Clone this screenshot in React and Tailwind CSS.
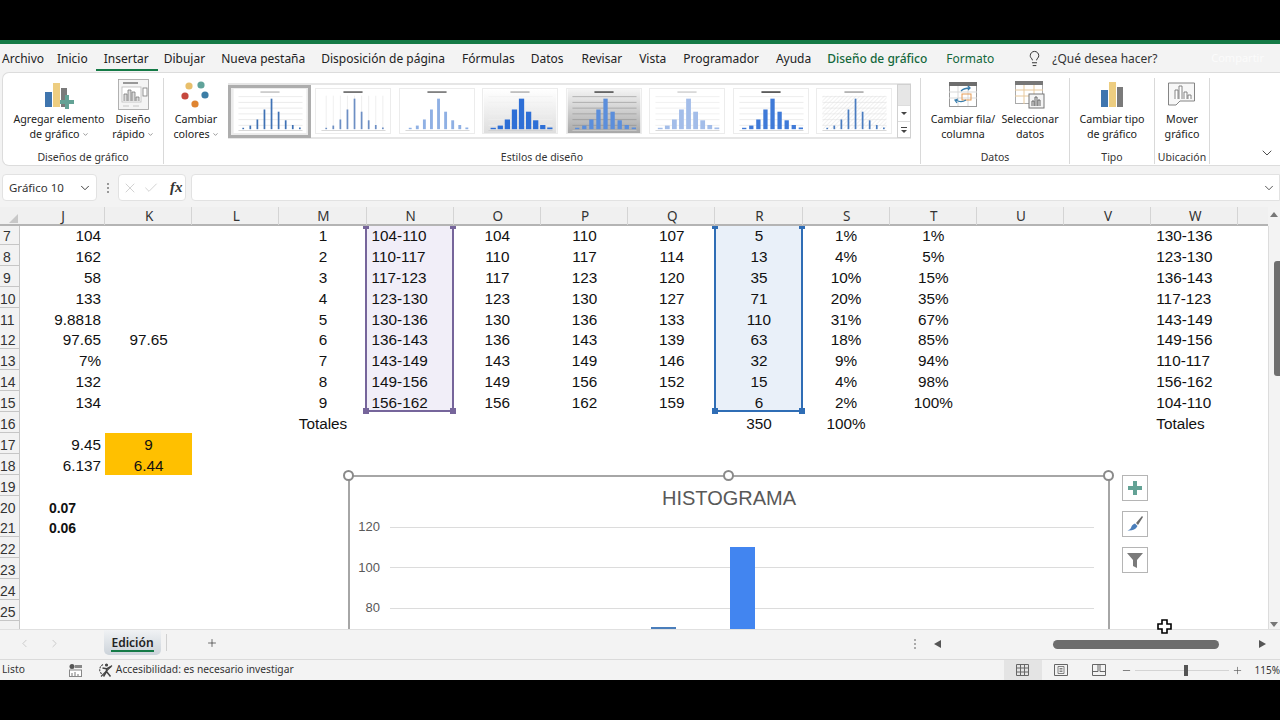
import { ChevronDown, ChevronLeft, ChevronRight, Lightbulb, Plus, X, Check, Minus } from 'lucide-react'

const tabs = [
    ['Archivo', 'ml-[2px]'],
    ['Inicio', 'ml-[13px]'],
    ['Insertar', 'ml-[16px]'],
    ['Dibujar', 'ml-[15px]'],
    ['Nueva pestaña', 'ml-[16px]'],
    ['Disposición de página', 'ml-[16px]'],
    ['Fórmulas', 'ml-[17px]'],
    ['Datos', 'ml-[16px]'],
    ['Revisar', 'ml-[18px]'],
    ['Vista', 'ml-[17px]'],
    ['Programador', 'ml-[17px]'],
    ['Ayuda', 'ml-[17px]'],
]

const columns = ['J', 'K', 'L', 'M', 'N', 'O', 'P', 'Q', 'R', 'S', 'T', 'U', 'V', 'W']

const rows = [
    { n: 7, J: '104', M: '1', N: '104-110', O: '104', P: '110', Q: '107', R: '5', S: '1%', T: '1%', W: '130-136' },
    { n: 8, J: '162', M: '2', N: '110-117', O: '110', P: '117', Q: '114', R: '13', S: '4%', T: '5%', W: '123-130' },
    { n: 9, J: '58', M: '3', N: '117-123', O: '117', P: '123', Q: '120', R: '35', S: '10%', T: '15%', W: '136-143' },
    { n: 10, J: '133', M: '4', N: '123-130', O: '123', P: '130', Q: '127', R: '71', S: '20%', T: '35%', W: '117-123' },
    { n: 11, J: '9.8818', M: '5', N: '130-136', O: '130', P: '136', Q: '133', R: '110', S: '31%', T: '67%', W: '143-149' },
    { n: 12, J: '97.65', K: '97.65', M: '6', N: '136-143', O: '136', P: '143', Q: '139', R: '63', S: '18%', T: '85%', W: '149-156' },
    { n: 13, J: '7%', M: '7', N: '143-149', O: '143', P: '149', Q: '146', R: '32', S: '9%', T: '94%', W: '110-117' },
    { n: 14, J: '132', M: '8', N: '149-156', O: '149', P: '156', Q: '152', R: '15', S: '4%', T: '98%', W: '156-162' },
    { n: 15, J: '134', M: '9', N: '156-162', O: '156', P: '162', Q: '159', R: '6', S: '2%', T: '100%', W: '104-110' },
    { n: 16, M: 'Totales', R: '350', S: '100%', W: 'Totales' },
    { n: 17, J: '9.45', K: '9' },
    { n: 18, J: '6.137', K: '6.44' },
    { n: 19 },
    { n: 20, J: '0.07', bold: true },
    { n: 21, J: '0.06', bold: true },
    { n: 22 },
    { n: 23 },
    { n: 24 },
    { n: 25 },
    { n: '' },
]

const heights = [5, 13, 35, 71, 110, 63, 32, 15, 6]

const thumbs = [
    { id: 'a', bar: '#3f72b5', w: 1.8, title: '#bbb', lines: '#dcdcdc', top: '#fff', bottom: '#fff' },
    { id: 'b', bar: '#6d8fc4', w: 1.8, title: '#444', lines: '#fff', top: '#fff', bottom: '#fff', vert: true },
    { id: 'c', bar: '#8fb0e4', w: 3, title: '#555', lines: '#fff', top: '#fff', bottom: '#fff' },
    { id: 'd', bar: '#2e6fd6', w: 5.5, title: '#aaa', lines: '#f0f0f0', top: '#fff', bottom: '#dedede' },
    { id: 'e', bar: '#5b8edb', w: 4.5, title: '#333', lines: '#8c8c8c', top: '#f4f4f4', bottom: '#a8a8a8' },
    { id: 'f', bar: '#a3bde9', w: 5, title: '#ccc', lines: '#e4e4e4', top: '#fff', bottom: '#fff' },
    { id: 'g', bar: '#3f7ad8', w: 4.5, title: '#222', lines: '#ddd', top: '#fff', bottom: '#fff' },
    { id: 'h', bar: '#4a7cc0', w: 1.8, title: '#999', lines: '#e0e0e0', top: '#fff', bottom: '#fff', hatch: true },
]

const Thumb = ({ t }) => (
    <svg viewBox="0 0 76 46" className="w-[76px] h-[46px] shrink-0 border border-[#ececec]">
        <defs>
            <linearGradient id={`bg-${t.id}`} x1="0" x2="0" y1="0" y2="1">
                <stop offset="0" stopColor={t.top} />
                <stop offset="1" stopColor={t.bottom} />
            </linearGradient>
            <pattern id={`hatch-${t.id}`} width="3" height="3" patternUnits="userSpaceOnUse" patternTransform="rotate(45)">
                <line x1="0" x2="0" y1="0" y2="3" stroke="#dcdcdc" strokeWidth="0.8" />
            </pattern>
        </defs>
        <rect width="76" height="46" fill={`url(#bg-${t.id})`} />
        {t.hatch && <rect x="5" y="7" width="67" height="35" fill={`url(#hatch-${t.id})`} />}
        <rect x="28" y="2.5" width="20" height="1.4" fill={t.title} />
        {[8, 14, 20, 26, 32, 38].map((y) => (
            <line key={y} x1="5" x2="72" y1={y} y2={y} stroke={t.lines} strokeWidth="0.6" />
        ))}
        {t.vert && heights.map((h, i) => (
            <line key={i} x1={10 + i * 7.4} x2={10 + i * 7.4} y1="7" y2="42" stroke="#e2e2e2" strokeWidth="0.6" />
        ))}
        {heights.map((h, i) => (
            <rect key={i} x={10 + i * 7.4 - t.w / 2} y={42 - h * 0.29} width={t.w} height={h * 0.29} fill={t.bar} />
        ))}
        <rect x="5" y="43" width="67" height="0.8" fill="#ccc" />
    </svg>
)

const Group = ({ label, className, children }) => (
    <div className={`flex flex-col border-r border-[#d9d9d9] h-[86px] mt-[5px] ${className}`}>
        <div className="flex-1 flex">{children}</div>
        <p className="text-[10.5px] leading-[14px] text-center text-[#333]">{label}</p>
    </div>
)

const BigButton = ({ icon, top, bottom, arrow, className }) => (
    <div className={`flex flex-col items-center ${className}`}>
        <div className="h-[31px] flex items-center justify-center mt-[1px]">{icon}</div>
        <p className="text-[10.7px] leading-[15px] text-center text-[#222] mt-[2px] whitespace-nowrap">{top}</p>
        <p className="text-[10.7px] leading-[15px] text-center text-[#222] whitespace-nowrap flex items-center gap-[2px]">
            {bottom}
            {arrow && <ChevronDown size={7} strokeWidth={2} className="text-[#555]" />}
        </p>
    </div>
)

const AddElementIcon = () => (
    <svg width="30" height="28" viewBox="0 0 30 28">
        <rect x="1" y="11" width="7" height="15" fill="#3f75ae" />
        <rect x="9" y="2" width="7" height="24" fill="#edcd80" />
        <rect x="17" y="7" width="6" height="19" fill="#7a7a7a" />
        <path d="M21 14h4v5h5v4h-5v5h-4v-5h-5v-4h5z" fill="#63a295" />
    </svg>
)

const QuickLayoutIcon = () => (
    <svg width="31" height="31" viewBox="0 0 31 31" fill="none" stroke="#7a7a7a" strokeWidth="0.8">
        <rect x="0.5" y="0.5" width="30" height="30" fill="#f4f4f4" stroke="#a0a0a0" />
        <line x1="5" x2="20" y1="4" y2="4" strokeWidth="1.5" />
        <rect x="4" y="8" width="19" height="15" fill="#fff" stroke="#bbb" />
        <path d="M6 22v-7h3v7M10 22V11h3v11M14 22v-9h3v9M18 22v-4h3v4" fill="#ddd" />
        <rect x="25" y="9" width="4" height="8" fill="#fff" />
        <line x1="5" x2="11" y1="27" y2="27" stroke="#bbb" />
        <line x1="15" x2="21" y1="27" y2="27" stroke="#bbb" />
    </svg>
)

const ColorsIcon = () => (
    <svg width="30" height="28" viewBox="0 0 30 28">
        <circle cx="8" cy="5" r="3.6" fill="#e8bf6b" />
        <circle cx="20" cy="4" r="3.6" fill="#60a39a" />
        <circle cx="4" cy="15" r="3.6" fill="#c6483e" />
        <circle cx="24" cy="14" r="3.6" fill="#3c7ea6" />
        <circle cx="14" cy="23" r="3.6" fill="#df8431" />
    </svg>
)

const SwitchIcon = () => (
    <svg width="29" height="25" viewBox="0 0 29 25" fill="none">
        <rect x="0.5" y="0.5" width="27" height="24" fill="#fff" stroke="#999" />
        <rect x="0" y="0" width="28" height="4" fill="#6d6d6d" />
        <path d="M0 10h28M0 16h28M9 4v20M19 4v20" stroke="#d9d9d9" />
        <rect x="13" y="12" width="9" height="6" stroke="#e59b54" />
        <path d="M12 9c3-3 6-3 9-3m-2-2 2 2-2 2" stroke="#3a7fae" strokeWidth="1.3" />
        <path d="M17 18c-3 2-7 2-10 0m1 3-2-3 3-1" stroke="#3a7fae" strokeWidth="1.3" />
    </svg>
)

const SelectDataIcon = () => (
    <svg width="30" height="28" viewBox="0 0 30 28" fill="none">
        <rect x="0.5" y="0.5" width="27" height="22" fill="#fff" stroke="#aaa" />
        <rect x="0" y="0" width="28" height="4" fill="#777" />
        <path d="M0 9h28M0 15h28M9 4v19M19 4v19" stroke="#e8c99c" />
        <rect x="14" y="13" width="15" height="14" fill="#f4f4f4" stroke="#777" />
        <path d="M17 25v-5h2v5M20 25v-9h2v9M23 25v-6h2v6" stroke="#666" />
    </svg>
)

const ChangeTypeIcon = () => (
    <svg width="23" height="25" viewBox="0 0 23 25">
        <rect x="0" y="8" width="7" height="17" fill="#3f75ae" />
        <rect x="8" y="0" width="7" height="25" fill="#edcd80" />
        <rect x="16" y="5" width="6" height="20" fill="#7a7a7a" />
    </svg>
)

const MoveChartIcon = () => (
    <svg width="28" height="25" viewBox="0 0 28 25" fill="none" stroke="#777" strokeWidth="0.9">
        <path d="M0.5 23V1h26v18H12l-4 4z" fill="#f7f7f7" />
        <path d="M7 17V8h3v9M11 17V4h3v13M16 17v-7h3v7M20 17v-4h3v4" fill="#fff" />
    </svg>
)

const AccessIcon = () => (
    <svg width="16" height="16" viewBox="0 0 16 16" fill="none" stroke="#444" strokeWidth="1.1">
        <path d="M5 2.5C2.5 4 1 6.5 2 9.5c.5 1.2 1.2 2 2 2.6" strokeDasharray="2 1" />
        <circle cx="8.5" cy="3" r="1" fill="#444" />
        <path d="M4.5 6 8.5 6.8 13 4.5M8.5 6.8V9.5M8.5 9.5 5.5 14.5M8.5 9.5 12.5 14.5" strokeWidth="1.5" />
        <path d="M3 14.5 14 3.5" />
    </svg>
)

const Cell = ({ col, row }) => {
    const value = row[col]
    let align = 'justify-center'
    if (col === 'N' || col === 'W') align = 'justify-start pl-[5px]'
    if (col === 'J' && !row.bold) align = 'justify-end pr-[4px]'
    let bg = ''
    if (col === 'K' && (row.n === 17 || row.n === 18)) bg = 'bg-[#ffc000]'
    if (col === 'N' && row.n <= 15) bg = 'bg-[#f1eef8]'
    if (col === 'R' && row.n <= 15) bg = 'bg-[#e9f0f9]'
    return (
        <div className={`flex items-center min-w-0 whitespace-nowrap pt-[3px] ${align} ${bg} ${row.bold ? 'font-bold text-[14px]' : ''}`}>
            {value}
        </div>
    )
}

const SideButton = ({ children }) => (
    <div className="w-[26px] h-[26px] border border-[#b5b5b5] bg-white flex items-center justify-center">{children}</div>
)

const Selection = ({ className, handle }) => (
    <div className={`absolute top-0 w-[89px] h-[186px] border-x-2 border-b-2 ${className}`}>
        <span className={`absolute -left-[4px] top-0 w-[6px] h-[3px] ${handle}`} />
        <span className={`absolute -right-[4px] top-0 w-[6px] h-[3px] ${handle}`} />
        <span className={`absolute -left-[4px] -bottom-[4px] w-[6px] h-[6px] ${handle}`} />
        <span className={`absolute -right-[4px] -bottom-[4px] w-[6px] h-[6px] ${handle}`} />
    </div>
)

const Chart = () => (
    <div className="absolute left-[348px] top-[249px] w-[762px] h-[200px] border-2 border-b-0 border-[#a6a6a6] bg-white font-['Liberation_Sans',sans-serif]">
        <p className="text-center text-[20px] leading-[22px] text-[#595959] mt-[10px]">HISTOGRAMA</p>
        <div className="relative mt-[12px] ml-[8px] mr-[14px] flex flex-col gap-[28.5px] text-[13px] text-[#595959]">
            {['120', '100', '80'].map((label) => (
                <div key={label} className="flex items-center gap-[10px] h-[12px]">
                    <span className="w-[22px] text-right">{label}</span>
                    <span className="flex-1 h-px bg-[#dcdcdc]" />
                </div>
            ))}
            <span className="absolute left-[293px] top-[106px] w-[25px] h-[6px] bg-[#4a7ebb]" />
            <span className="absolute left-[372px] top-[26px] w-[25px] h-[100px] bg-[#4285f0]" />
        </div>
    </div>
)

const Sheet = () => (
    <div className="relative flex-1 min-h-0 overflow-hidden bg-white">
        <div className="flex flex-col -mt-[2px] text-[15.3px] text-[#111] font-['Liberation_Sans',sans-serif]">
            {rows.map((row) => (
                <div key={row.n} className="grid grid-cols-[20px_85px_repeat(13,87.2px)] h-[20.9px] shrink-0 leading-[18px]">
                    <div className="bg-[#f2f2f2] border-r border-b border-[#c6c6c6] text-[14px] text-[#333] text-center pr-[5px] pt-[3px] overflow-hidden">{row.n}</div>
                    {columns.map((col) => (
                        <Cell key={col} col={col} row={row} />
                    ))}
                </div>
            ))}
        </div>

        <Selection className="left-[365px] border-[#76659b]" handle="bg-[#76659b]" />
        <Selection className="left-[714px] border-[#2f6db5]" handle="bg-[#2f6db5]" />

        <Chart />
        <span className="absolute left-[343px] top-[244px] w-[11px] h-[11px] rounded-full border-2 border-[#8a8a8a] bg-white" />
        <span className="absolute left-[723px] top-[244px] w-[11px] h-[11px] rounded-full border-2 border-[#8a8a8a] bg-white" />
        <span className="absolute left-[1103px] top-[244px] w-[11px] h-[11px] rounded-full border-2 border-[#8a8a8a] bg-white" />

        <div className="absolute left-[1122px] top-[249px] flex flex-col gap-[10px]">
            <SideButton>
                <svg width="16" height="16" viewBox="0 0 16 16">
                    <path d="M6 1h4v5h5v4h-5v5H6v-5H1V6h5z" fill="#63a295" />
                </svg>
            </SideButton>
            <SideButton>
                <svg width="20" height="20" viewBox="0 0 20 20">
                    <path d="M11 9 17 2l1 1-5 8z" fill="#6b6b6b" />
                    <path d="M10 9.5 12.5 12c-2 4-6 5-10 4.5 2.5-1 3.5-2 4-4 .5-1.5 2-2.5 3.5-3z" fill="#4a7ebb" />
                </svg>
            </SideButton>
            <SideButton>
                <svg width="18" height="18" viewBox="0 0 18 18">
                    <path d="M1 2h16l-6 7v8l-4-2V9z" fill="#7a7a7a" />
                </svg>
            </SideButton>
        </div>
    </div>
)

const App = () => {
    return (
        <div className="w-[1280px] h-[720px] bg-black flex flex-col overflow-hidden font-['Noto_Sans',sans-serif]">
            <div className="h-[40px] shrink-0" />
            <div className="relative h-[640px] bg-[#f3f3f3] border-t-4 border-[#147a46] flex flex-col">
                <div className="h-[28px] shrink-0 flex items-center pt-[1px] text-[12px] text-[#222]">
                    {tabs.map(([name, margin]) => (
                        <span key={name} className={`relative whitespace-nowrap ${margin}`}>
                            {name}
                            {name === 'Insertar' && <span className="absolute -left-[8px] -right-[9px] top-[19px] h-[2px] bg-[#147a46]" />}
                        </span>
                    ))}
                    <span className="ml-[16px] whitespace-nowrap font-medium text-[#14683c]">Diseño de gráfico</span>
                    <span className="ml-[19px] whitespace-nowrap text-[#14683c]">Formato</span>
                    <Lightbulb size={17} strokeWidth={1.4} className="ml-[32px] text-[#333]" />
                    <span className="ml-[9px] whitespace-nowrap text-[#333]">¿Qué desea hacer?</span>
                    <span className="ml-auto mr-[16px] text-[11px] text-[#fbfbfb]">Compartir</span>
                </div>

                <div className="h-[94px] shrink-0 ml-[2px] bg-white rounded-l-[7px] border-y border-l border-[#dcdcdc] flex relative">
                    <Group label="Diseños de gráfico" className="w-[161px]">
                        <BigButton icon={<AddElementIcon />} top="Agregar elemento" bottom="de gráfico" arrow className="w-[112px]" />
                        <BigButton icon={<QuickLayoutIcon />} top="Diseño" bottom="rápido" arrow className="w-[36px]" />
                    </Group>
                    <Group label="Estilos de diseño" className="w-[757px]">
                        <BigButton icon={<ColorsIcon />} top="Cambiar" bottom="colores" arrow className="w-[64px] shrink-0" />
                        <div className="flex items-center h-[56px] mt-[5px] bg-white border-y-2 border-[#e6e6e6]">
                            <div className="flex items-center justify-center w-[83px] h-[53px] border-[3px] border-[#adadad] bg-[#ececec]">
                                <Thumb t={thumbs[0]} />
                            </div>
                            <div className="flex items-center gap-[7.5px] ml-[4px] mr-[5px]">
                                {thumbs.slice(1).map((t) => (
                                    <Thumb key={t.id} t={t} />
                                ))}
                            </div>
                            <div className="w-[14px] h-[54px] border border-[#d0d0d0] bg-white flex flex-col text-[#555]">
                                <div className="h-[20px] bg-[#e6e6e6]" />
                                <div className="h-[17px] border-y border-[#ddd] flex items-center justify-center">
                                    <span className="w-0 h-0 border-x-[3px] border-t-[3px] border-x-transparent border-t-[#444]" />
                                </div>
                                <div className="flex-1 flex flex-col items-center justify-center gap-[2px]">
                                    <span className="w-[6px] h-px bg-[#444]" />
                                    <span className="w-0 h-0 border-x-[3px] border-t-[3px] border-x-transparent border-t-[#444]" />
                                </div>
                            </div>
                        </div>
                    </Group>
                    <Group label="Datos" className="w-[149px]">
                        <BigButton icon={<SwitchIcon />} top="Cambiar fila/" bottom="columna" className="w-[84px]" />
                        <BigButton icon={<SelectDataIcon />} top="Seleccionar" bottom="datos" className="w-[50px]" />
                    </Group>
                    <Group label="Tipo" className="w-[85px]">
                        <BigButton icon={<ChangeTypeIcon />} top="Cambiar tipo" bottom="de gráfico" className="w-full" />
                    </Group>
                    <Group label="Ubicación" className="w-[55px]">
                        <BigButton icon={<MoveChartIcon />} top="Mover" bottom="gráfico" className="w-full" />
                    </Group>
                    <ChevronDown size={16} strokeWidth={1.3} className="absolute right-[5px] bottom-[4px] text-[#333]" />
                </div>

                <div className="h-[27px] shrink-0 mt-[8px] flex items-stretch">
                    <div className="w-[95px] ml-[2px] bg-white rounded-[4px] border border-[#e2e2e2] flex items-center justify-between pl-[6px] pr-[4px] text-[11.5px] text-[#333]">
                        Gráfico 10
                        <ChevronDown size={14} strokeWidth={1.6} className="text-[#333]" />
                    </div>
                    <div className="w-[21px] flex flex-col items-center justify-center gap-[2px]">
                        <span className="w-[2px] h-[2px] bg-[#999]" />
                        <span className="w-[2px] h-[2px] bg-[#999]" />
                        <span className="w-[2px] h-[2px] bg-[#999]" />
                    </div>
                    <div className="w-[68px] bg-white rounded-[4px] border border-[#e2e2e2] flex items-center pl-[3px] gap-[5px]">
                        <X size={16} strokeWidth={1} className="text-[#bbb]" />
                        <Check size={16} strokeWidth={1} className="text-[#bbb]" />
                        <span className="ml-[6px] font-['Liberation_Serif',serif] italic font-bold text-[15px] text-[#333]">fx</span>
                    </div>
                    <div className="flex-1 ml-[5px] bg-white rounded-l-[4px] border border-[#e2e2e2] flex items-center justify-end pr-[3px]">
                        <ChevronDown size={14} strokeWidth={1.4} className="text-[#333]" />
                    </div>
                </div>

                <div className="h-[19px] mt-[6px] shrink-0 flex relative z-10">
                    <div className="flex-1 grid grid-cols-[20px_85px_repeat(13,87.2px)] border-b-2 border-[#b4b4b4] bg-[#f0f0f0] text-[13.5px] leading-[18px] text-[#333] min-w-0">
                        <div className="flex items-end justify-end pr-[2px] pb-[2px]">
                            <span className="w-0 h-0 border-l-[9px] border-b-[9px] border-l-transparent border-b-[#c8c8c8]" />
                        </div>
                        {columns.map((col) => (
                            <div key={col} className="text-center pl-[2px] border-r border-[#d4d4d4]">{col}</div>
                        ))}
                    </div>
                    <div className="w-[12px] flex justify-center pt-[5px]">
                        <span className="w-0 h-0 border-x-[4px] border-b-[5px] border-x-transparent border-b-[#777]" />
                    </div>
                </div>

                <div className="flex-1 min-h-0 flex">
                    <Sheet />
                    <div className="w-[12px] shrink-0 relative border-l border-[#dcdcdc]">
                        <span className="absolute right-0 top-[35px] w-[6px] h-[115px] rounded-l-[3px] bg-[#6f6f6f]" />
                        <span className="absolute right-[2px] bottom-[2px] w-0 h-0 border-x-[4px] border-t-[5px] border-x-transparent border-t-[#777]" />
                    </div>
                </div>

                <div className="h-[30px] shrink-0 border-t border-[#e0e0e0] flex items-start text-[#222]">
                    <ChevronLeft size={13} strokeWidth={1} className="ml-[18px] mt-[7px] text-[#aaa]" />
                    <ChevronRight size={13} strokeWidth={1} className="ml-[17px] mt-[7px] text-[#aaa]" />
                    <div className="ml-[43px] w-[57px] h-[25px] rounded-b-[5px] bg-gradient-to-b from-[#f0f2f4] to-[#ccd3da] flex justify-center pt-[5px]">
                        <span className="text-[12px] font-semibold leading-[16px] border-b-2 border-[#147a46] h-[17px]">Edición</span>
                    </div>
                    <span className="ml-[5px] mt-[4px] w-px h-[17px] bg-[#d0d0d0]" />
                    <Plus size={12} strokeWidth={1.4} className="ml-[39px] mt-[7px] text-[#333]" />
                    <div className="ml-[696px] mt-[9px] flex flex-col gap-[2px]">
                        <span className="w-[2px] h-[2px] bg-[#aaa]" />
                        <span className="w-[2px] h-[2px] bg-[#aaa]" />
                        <span className="w-[2px] h-[2px] bg-[#aaa]" />
                    </div>
                    <span className="ml-[18px] mt-[10px] w-0 h-0 border-y-[4.5px] border-r-[7px] border-y-transparent border-r-[#555]" />
                    <span className="ml-[112px] mt-[10px] w-[166px] h-[9px] rounded-full bg-[#6d6d6d]" />
                    <span className="ml-[40px] mt-[10px] w-0 h-0 border-y-[4.5px] border-l-[7px] border-y-transparent border-l-[#555]" />
                </div>

                <div className="h-[21px] shrink-0 border-t border-[#dadada] flex items-center text-[10.25px] text-[#333]">
                    <span className="ml-[2px]">Listo</span>
                    <svg width="13" height="13" viewBox="0 0 13 13" className="ml-[44px]">
                        <circle cx="3" cy="2.5" r="2.5" fill="#555" />
                        <rect x="6" y="1" width="7" height="3" fill="#888" />
                        <rect x="0.5" y="6" width="12" height="6.5" fill="#fff" stroke="#888" />
                        <path d="M3 12V9M6 12V8M9 12v-2" stroke="#777" />
                    </svg>
                    <span className="ml-[16px]"><AccessIcon /></span>
                    <span className="ml-[2px]">Accesibilidad: es necesario investigar</span>
                    <div className="ml-auto flex items-center h-full">
                        <div className="w-[38px] h-full bg-[#e4e4e4] flex items-center justify-center">
                            <svg width="13" height="12" viewBox="0 0 13 12" fill="none" stroke="#666">
                                <path d="M.5.5h12v11H.5zM.5 4h12M.5 8h12M4.5.5v11M8.5.5v11" />
                            </svg>
                        </div>
                        <div className="w-[38px] flex justify-center">
                            <svg width="14" height="12" viewBox="0 0 14 12" fill="none" stroke="#666">
                                <path d="M.5.5h13v11H.5z" />
                                <path d="M4 2.5h6v7H4zM5.5 4.5h3M5.5 6h3M5.5 7.5h3" strokeWidth=".8" />
                            </svg>
                        </div>
                        <div className="w-[38px] flex justify-center">
                            <svg width="14" height="12" viewBox="0 0 14 12" fill="none" stroke="#666">
                                <path d="M.5.5h13v11H.5zM.5 7.5h5.5V.5M8 .5v7h5.5" />
                            </svg>
                        </div>
                        <Minus size={11} strokeWidth={1.6} className="ml-[3px] text-[#555]" />
                        <div className="relative w-[94px] h-px bg-[#d4d4d4] ml-[3px]">
                            <span className="absolute left-[49px] -top-[5px] w-[4px] h-[11px] bg-[#555]" />
                        </div>
                        <Plus size={11} strokeWidth={1.4} className="ml-[3px] text-[#555]" />
                        <span className="ml-[12px] text-[10px] whitespace-nowrap">115%</span>
                    </div>
                </div>

                <svg width="15" height="15" viewBox="0 0 15 15" className="absolute left-[1157px] top-[575px]">
                    <path d="M5 1h5v4h4v5h-4v4H5v-4H1V5h4z" fill="#fff" stroke="#000" strokeWidth="1.6" />
                </svg>
            </div>
            <div className="flex-1" />
        </div>
    )
}

export default App
